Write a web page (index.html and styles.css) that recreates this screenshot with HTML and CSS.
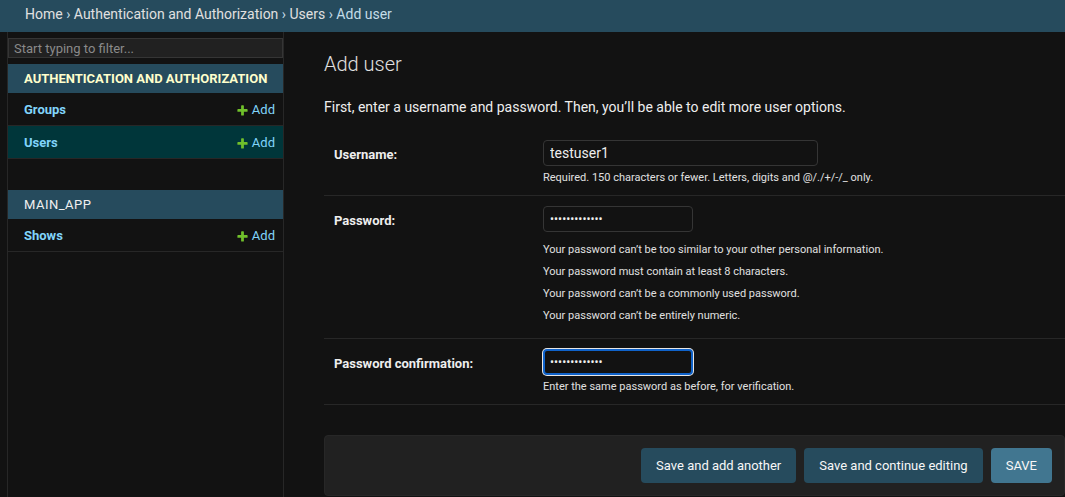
FILE: index.html
```html
<!DOCTYPE html>
<html lang="en">
<head>
<meta charset="utf-8">
<title>Add user | Django site admin</title>
<link rel="stylesheet" href="styles.css">
</head>
<body>
<div class="breadcrumbs"><a href="#">Home</a> &rsaquo; <a href="#">Authentication and Authorization</a> &rsaquo; <a href="#">Users</a> &rsaquo; Add user</div>
<div class="main">
  <button class="toggle-nav" type="button"><span class="toggle-glyph">&laquo;</span></button>
  <nav class="sidebar">
    <input class="nav-filter" type="search" placeholder="Start typing to filter...">
    <div class="app current-app">
      <div class="caption">Authentication and Authorization</div>
      <div class="model"><a class="model-name" href="#">Groups</a><a class="addlink" href="#"><svg class="plus" width="13" height="13" viewBox="0 0 1792 1792"><path fill="#70bf2b" d="M1600 796v192q0 40-28 68t-68 28h-416v416q0 40-28 68t-68 28h-192q-40 0-68-28t-28-68v-416h-416q-40 0-68-28t-28-68v-192q0-40 28-68t68-28h416v-416q0-40 28-68t68-28h192q40 0 68 28t28 68v416h416q40 0 68 28t28 68z"/></svg>Add</a></div>
      <div class="model selected"><a class="model-name" href="#">Users</a><a class="addlink" href="#"><svg class="plus" width="13" height="13" viewBox="0 0 1792 1792"><path fill="#70bf2b" d="M1600 796v192q0 40-28 68t-68 28h-416v416q0 40-28 68t-68 28h-192q-40 0-68-28t-28-68v-416h-416q-40 0-68-28t-28-68v-192q0-40 28-68t68-28h416v-416q0-40 28-68t68-28h192q40 0 68 28t28 68v416h416q40 0 68 28t28 68z"/></svg>Add</a></div>
    </div>
    <div class="app">
      <div class="caption">main_app</div>
      <div class="model"><a class="model-name" href="#">Shows</a><a class="addlink" href="#"><svg class="plus" width="13" height="13" viewBox="0 0 1792 1792"><path fill="#70bf2b" d="M1600 796v192q0 40-28 68t-68 28h-416v416q0 40-28 68t-68 28h-192q-40 0-68-28t-28-68v-416h-416q-40 0-68-28t-28-68v-192q0-40 28-68t68-28h416v-416q0-40 28-68t68-28h192q40 0 68 28t28 68v416h416q40 0 68 28t28 68z"/></svg>Add</a></div>
    </div>
  </nav>
  <div class="content">
    <h1>Add user</h1>
    <p class="intro">First, enter a username and password. Then, you’ll be able to edit more user options.</p>
    <form class="user-form">
      <fieldset class="fieldset">
        <div class="form-row">
          <label class="label" for="id_username">Username:</label>
          <div class="field">
            <input class="input w-user" id="id_username" type="text" value="testuser1">
            <div class="help">Required. 150 characters or fewer. Letters, digits and @/./+/-/_ only.</div>
          </div>
        </div>
        <div class="form-row">
          <label class="label" for="id_password1">Password:</label>
          <div class="field">
            <input class="input w-pass" id="id_password1" type="password" value="testpassword1">
            <ul class="help help-list">
              <li>Your password can’t be too similar to your other personal information.</li>
              <li>Your password must contain at least 8 characters.</li>
              <li>Your password can’t be a commonly used password.</li>
              <li>Your password can’t be entirely numeric.</li>
            </ul>
          </div>
        </div>
        <div class="form-row">
          <label class="label" for="id_password2">Password confirmation:</label>
          <div class="field">
            <input class="input w-pass focused" id="id_password2" type="password" value="testpassword1">
            <div class="help">Enter the same password as before, for verification.</div>
          </div>
        </div>
      </fieldset>
      <div class="submit-row">
        <button class="btn" type="button">Save and add another</button>
        <button class="btn" type="button">Save and continue editing</button>
        <button class="btn btn-default" type="button">SAVE</button>
      </div>
    </form>
  </div>
</div>
</body>
</html>
```
FILE: styles.css
```css
* {
  box-sizing: border-box;
}

html,
body {
  margin: 0;
  padding: 0;
  background: #121212;
}

body {
  font-family: Roboto, "Liberation Sans", sans-serif;
  font-size: 14px;
  color: #eeeeee;
  height: 497px;
  overflow: hidden;
}

a {
  text-decoration: none;
}

.breadcrumbs {
  background: #264b5d;
  color: #c4dce8;
  font-size: 14px;
  line-height: 16px;
  height: 32px;
  padding: 6px 25px 10px;
  white-space: nowrap;
}

.breadcrumbs a {
  color: #e0e0e0;
}

.main {
  display: flex;
  height: 465px;
}

.toggle-nav {
  flex: 0 0 24px;
  width: 24px;
  margin-left: -16px;
  padding: 250px 0 0;
  border: 0;
  border-right: 1px solid #272727;
  background: #121212;
  color: #4f7f96;
  font-family: Roboto, "Liberation Sans", sans-serif;
  font-size: 20px;
  display: flex;
  align-items: flex-start;
  justify-content: center;
}

.toggle-glyph {
  line-height: 23px;
}

.sidebar {
  flex: 0 0 276px;
  width: 276px;
  min-width: 0;
  border-right: 1px solid #272727;
}

.nav-filter {
  display: block;
  width: 100%;
  height: 20px;
  margin: 6px 0;
  padding: 2px 5px;
  border: 1px solid #353535;
  border-radius: 0;
  background: #212121;
  color: #eeeeee;
  font-family: Roboto, "Liberation Sans", sans-serif;
  font-size: 13px;
  outline: none;
}

.nav-filter::placeholder {
  color: #8a8a8a;
}

.app {
  margin-bottom: 31px;
}

.caption {
  background: #264b5d;
  color: #f0f0f0;
  padding: 8px 8px 8px 16px;
  font-size: 13px;
  line-height: 13px;
  letter-spacing: 0.5px;
  text-transform: uppercase;
  white-space: nowrap;
  overflow: hidden;
}

.current-app .caption {
  color: #ffffcc;
  font-weight: bold;
  letter-spacing: 0;
}

.model {
  display: flex;
  justify-content: space-between;
  align-items: center;
  padding: 9px 8px 7px 16px;
  font-size: 13px;
  line-height: 16px;
  border-bottom: 1px solid #272727;
}

.model.selected {
  background: #00363a;
}

.model-name {
  color: #81d4fa;
  font-weight: bold;
}

.addlink {
  color: #81d4fa;
  display: flex;
  align-items: center;
}

.plus {
  margin-right: 3px;
}

.content {
  flex: 1;
  min-width: 0;
  padding: 20px 0 0 40px;
}

h1 {
  margin: 0 0 21px;
  font-size: 20px;
  line-height: 24px;
  font-weight: 300;
  color: #e0e0e0;
}

.intro {
  margin: 0 0 13px;
  font-size: 14px;
  line-height: 20px;
}

.user-form {
  margin: 0;
}

.fieldset {
  margin: 0 0 30px;
  padding: 0;
  border: 0;
}

.form-row {
  display: flex;
  padding: 10px;
  border-bottom: 1px solid #272727;
}

.label {
  flex: 0 0 209px;
  padding-top: 8px;
  font-size: 13px;
  line-height: 13px;
  font-weight: bold;
  color: #eeeeee;
}

.field {
  display: flex;
  flex-direction: column;
  align-items: flex-start;
}

.input {
  height: 26px;
  padding: 5px 6px;
  border: 1px solid #353535;
  border-radius: 4px;
  background: #121212;
  color: #eeeeee;
  font-family: Roboto, "Liberation Sans", sans-serif;
  font-size: 14px;
  outline: none;
}

.w-user {
  width: 275px;
}

.w-pass {
  width: 150px;
  font-size: 12px;
}

.focused {
  border: 2px solid #0f62c9;
  padding: 4px 5px;
  box-shadow: 0 0 0 1px #e6e6e6;
}

.help {
  margin-top: 5px;
  font-size: 11px;
  line-height: 14px;
  color: #e0e0e0;
}

.help-list {
  list-style: none;
  margin: 3px 0 5px;
  padding: 0;
}

.help-list li {
  margin-top: 8px;
}

.submit-row {
  display: flex;
  justify-content: flex-end;
  gap: 8px;
  padding: 12px 12px 12px 14px;
  background: #212121;
  border: 1px solid #272727;
  border-radius: 4px;
}

.btn {
  height: 35px;
  padding: 10px 15px;
  border: 0;
  border-radius: 4px;
  background: #264b5d;
  color: #f7f7f7;
  font-family: Roboto, "Liberation Sans", sans-serif;
  font-size: 13px;
  line-height: 15px;
}

.btn-default {
  background: #417690;
}
```
